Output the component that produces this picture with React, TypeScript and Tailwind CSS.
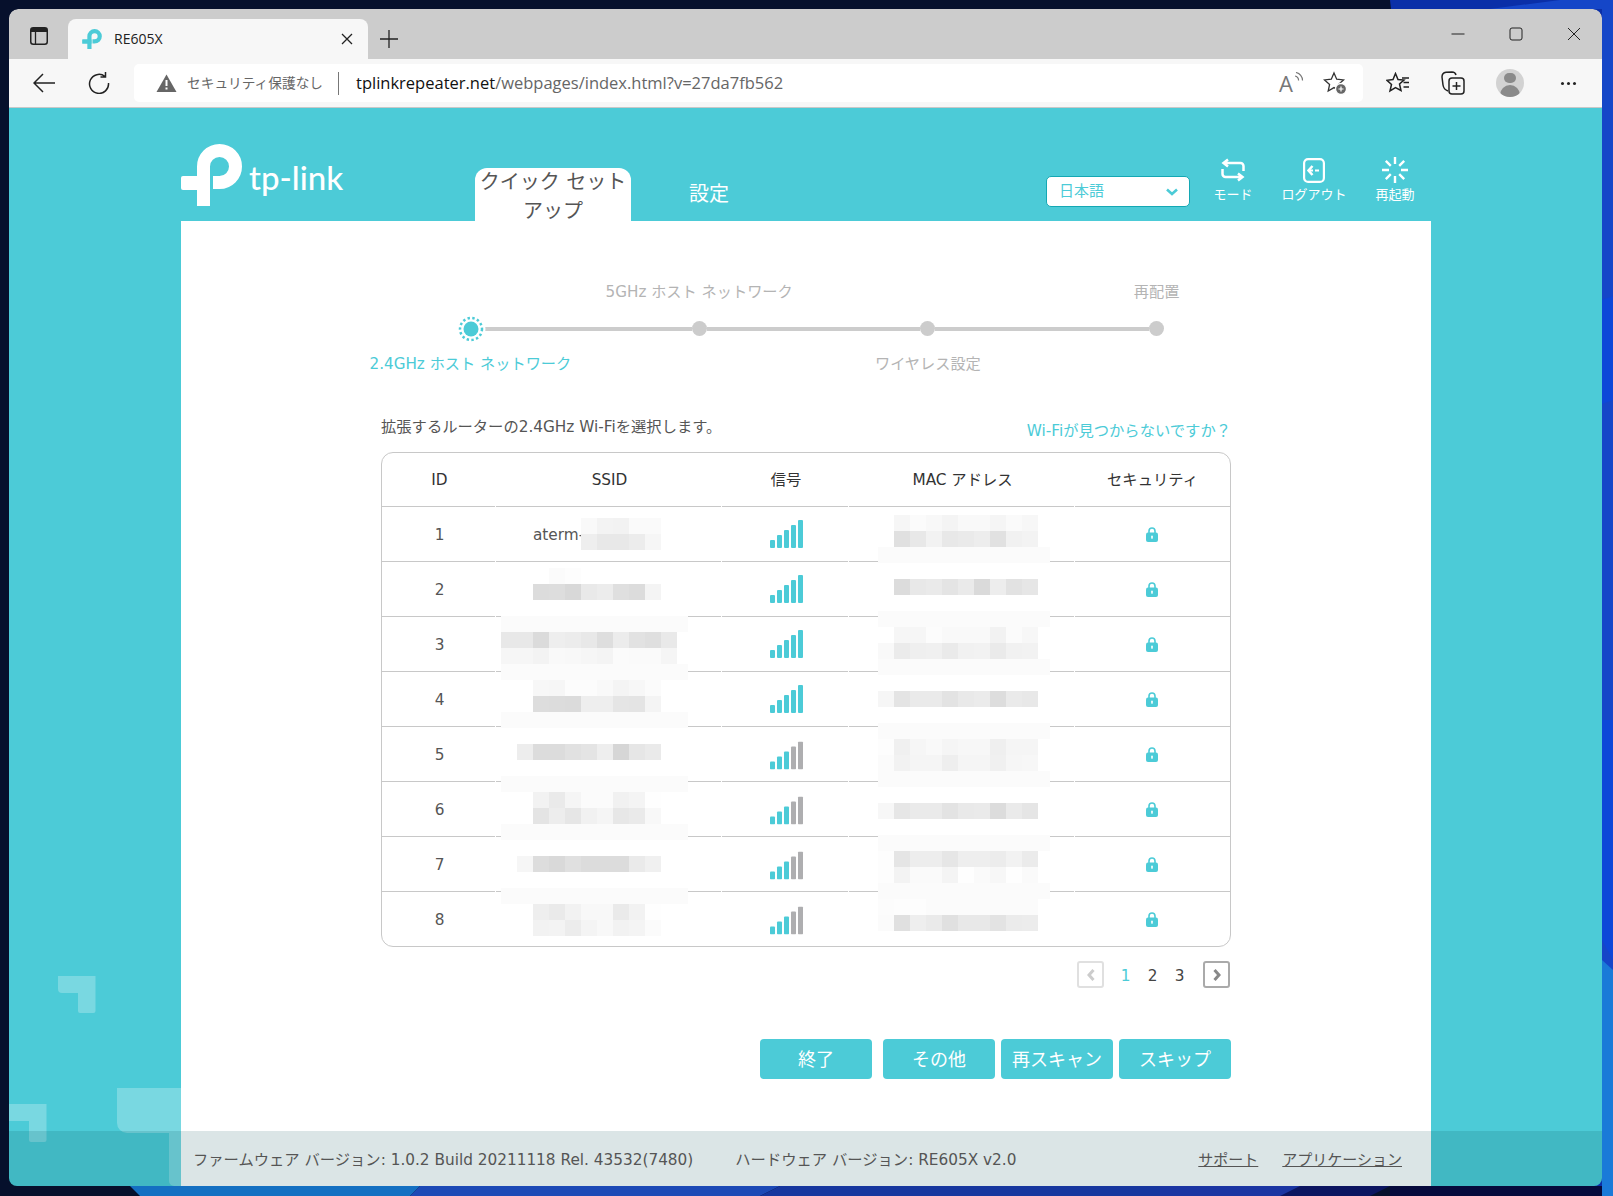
import * as React from "react";

const COLUMNS = "grid grid-cols-[114px_226px_127px_226px_155px]";

// pixelated areas of the screenshot: [top, left, ...shades], 16px blocks, page coordinates
const BLOCKS: [number, number, ...string[]][] = [
  [518, 581, "f9", "f3", "f2", "fa", "fa"],
  [534, 581, "ee", "e8", "e8", "ec", "f6"],
  [568, 549, "fb", "fd"],
  [584, 533, "dc", "dd", "d8", "e9", "ec", "df", "dc", "f4"],
  [632, 501, "e8", "e8", "db", "ee", "ec", "e8", "de", "ec", "e2", "df", "e9"],
  [648, 501, "f6", "f6", "f3", "f9", "f8", "f6", "f4", "fb", "fa", "fa", "f5"],
  [680, 533, "f7", "f6", "fc", "fc", "f9", "f4", "f7", "fb"],
  [696, 533, "dd", "dc", "db", "ee", "ee", "e5", "e4", "f4"],
  [744, 517, "ed", "dc", "dc", "e1", "e4", "ee", "d6", "e6", "ea"],
  [792, 533, "f2", "ea", "f5", "fb", "fb", "f1", "f4", "fe"],
  [808, 533, "e4", "ed", "e6", "f1", "f5", "e7", "ea", "f8"],
  [856, 517, "f6", "dd", "d9", "e0", "dc", "dc", "dc", "ea", "f0"],
  [904, 533, "ee", "ea", "f2", "f8", "f8", "ea", "f2", "fe"],
  [920, 533, "f2", "f3", "ec", "f4", "f8", "f2", "f4", "fb"],
  [515, 894, "f6", "fb", "f8", "f4", "f9", "f9", "f5", "fa", "f7"],
  [531, 894, "e0", "e8", "f2", "e8", "ea", "ed", "e1", "f1", "f3"],
  [579, 894, "dc", "e8", "ea", "e4", "ea", "da", "ed", "e2", "e6"],
  [627, 894, "f6", "f6", "fc", "f9", "f9", "f9", "f2", "fb", "f7"],
  [643, 878, "f9", "eb", "ef", "f0", "ea", "f1", "f2", "ea", "f1", "f2"],
  [691, 878, "f6", "e4", "ea", "ea", "e3", "e9", "eb", "dd", "ea", "e8"],
  [739, 878, "fd", "f0", "f6", "f9", "f5", "f7", "f7", "ef", "f5", "f5"],
  [755, 878, "fb", "f2", "f5", "f5", "ee", "f5", "f5", "f0", "f6", "f7"],
  [803, 878, "f7", "e6", "ea", "ea", "e3", "e9", "ea", "dc", "ea", "e5"],
  [851, 878, "fd", "e5", "ed", "ed", "e6", "ee", "ee", "ec", "f2", "eb"],
  [867, 878, "fd", "f3", "fa", "fa", "f4", "fe", "fa", "f7", "fe", "fa"],
  [899, 878, "fc", "fd", "fd", "fb", "fb", "fb", "fb", "fb", "fb", "fb"],
  [915, 878, "fb", "e0", "ee", "ea", "e0", "e8", "e8", "e3", "eb", "ec"],
];

// light bands that run over the row rules
const BANDS: [number, number, number][] = [
  [616, 501, 187],
  [664, 501, 187],
  [712, 501, 187],
  [776, 501, 187],
  [824, 501, 187],
  [888, 501, 187],
  [547, 878, 172],
  [611, 878, 172],
  [659, 878, 172],
  [723, 878, 172],
  [771, 878, 172],
  [835, 878, 172],
  [883, 878, 172],
];

function Mosaic() {
  return (
    <div className="absolute inset-0 pointer-events-none">
      {BANDS.map(([top, left, width]) => (
        <div
          key={`${top}-${left}`}
          className="absolute h-[16px] bg-[#fbfbfb]"
          style={{ top: top - 453, left: left - 382, width }}
        />
      ))}
      {BLOCKS.map(([top, left, ...shades]) =>
        shades.map((shade, i) => (
          <div
            key={`${top}-${left}-${i}`}
            className="absolute h-[16px] w-[16px]"
            style={{
              top: top - 453,
              left: left - 382 + i * 16,
              background: `#${shade}${shade}${shade}`,
            }}
          />
        )),
      )}
    </div>
  );
}

function TpMark({ className }: { className: string }) {
  return (
    <svg viewBox="181 144 61 62" className={className} fill="none" stroke="currentColor">
      <path d="M203.5 206V166.5A16 16 0 1 1 219.5 182.5H213" strokeWidth="13" />
      <rect x="181" y="176" width="29" height="14" rx="2" fill="currentColor" stroke="none" />
    </svg>
  );
}

function Signal({ weak }: { weak?: boolean }) {
  const bars = [8, 13, 18, 23, 28];
  return (
    <svg viewBox="0 0 34 28" className={`ml-[3px] h-[28px] w-[34px] ${weak ? "translate-y-[1.5px]" : ""}`}>
      {bars.map((h, i) => (
        <rect
          key={h}
          x={i * 7}
          y={28 - h}
          width="5"
          height={h}
          rx="1"
          fill={weak && i > 2 ? "#aeaeb0" : "#4ccbd7"}
        />
      ))}
    </svg>
  );
}

function Lock() {
  return (
    <svg viewBox="0 0 12 15" className="mr-[2px] h-[15px] w-[12px]">
      <path d="M3 7V4a3 3 0 0 1 6 0v3" fill="none" stroke="#4ccbd7" strokeWidth="1.6" />
      <rect x="0" y="5.5" width="12" height="9.5" rx="2" fill="#4ccbd7" />
      <rect x="5.2" y="8.5" width="1.6" height="3.4" rx=".8" fill="#fff" />
    </svg>
  );
}

function Wallpaper() {
  return (
    <svg viewBox="0 0 1613 1196" className="absolute inset-0 h-full w-full">
      <rect width="1613" height="1196" fill="#06102c" />
      <path d="M1390 0H1613V1196H1400L1500 1000Z" fill="#0a2fa8" />
      <path d="M1490 9L1560 0H1613V1196H1602V9Z" fill="#1546c8" />
      <path d="M1602 300L1613 296V400L1602 404ZM1602 720H1613V960L1602 940Z" fill="#0d47d8" />
      <path d="M1602 960L1613 970V1196H1602Z" fill="#1a7ad8" />
      <path d="M130 1186H420L410 1196H140Z" fill="#1470c2" />
      <path d="M420 1186H780L760 1196H410Z" fill="#1c49b6" />
      <path d="M780 1186H1160V1196H760Z" fill="#16369e" />
      <path d="M1160 1186H1340L1320 1196H1160Z" fill="#1a35a2" />
      <path d="M1300 1186H1390L1370 1196H1280Z" fill="#0b1560" />
      <path d="M1390 1186H1602V1196H1390Z" fill="#050a3c" />
    </svg>
  );
}

function WindowControls() {
  return (
    <div className="flex items-center text-[#222]">
      <div className="flex h-[50px] w-[58px] items-center justify-center">
        <svg viewBox="0 0 14 14" className="h-[14px] w-[14px]" fill="none" stroke="currentColor">
          <path d="M0.5 7H13.5" />
        </svg>
      </div>
      <div className="flex h-[50px] w-[58px] items-center justify-center">
        <svg viewBox="0 0 14 14" className="h-[14px] w-[14px]" fill="none" stroke="currentColor">
          <rect x="1" y="1" width="12" height="12" rx="2" />
        </svg>
      </div>
      <div className="flex h-[50px] w-[57px] items-center justify-center">
        <svg viewBox="0 0 14 14" className="h-[14px] w-[14px]" fill="none" stroke="currentColor">
          <path d="M1 1L13 13M13 1L1 13" />
        </svg>
      </div>
    </div>
  );
}

function BrowserChrome() {
  return (
    <div className="font-['Open_Sans','Noto_Sans_CJK_JP',sans-serif]">
      <div className="flex h-[50px] items-end rounded-t-[9px] bg-[#cccccc]">
        <div className="flex h-[50px] w-[59px] items-center justify-center pt-[4px]">
          <svg viewBox="0 0 18 18" className="h-[18px] w-[18px]" fill="none" stroke="#222">
            <rect x=".75" y=".75" width="16.5" height="16.5" rx="2.5" strokeWidth="1.5" />
            <path d="M1 1H17V5H1Z" fill="#222" stroke="none" />
            <path d="M5.5 5V17" strokeWidth="1.3" />
          </svg>
        </div>
        <div className="flex h-[40px] w-[300px] items-center rounded-t-[8px] bg-[#f7f7f7] pb-[1px] pl-[14px] pr-[15px]">
          <TpMark className="h-[20px] w-[20px] text-[#4ccbd7]" />
          <span className="ml-[12px] flex-1 text-[14px] text-[#222]">RE605X</span>
          <svg viewBox="0 0 12 12" className="h-[12px] w-[12px]" fill="none" stroke="#222" strokeWidth="1.3">
            <path d="M1 1L11 11M11 1L1 11" />
          </svg>
        </div>
        <div className="flex h-[40px] w-[42px] items-center justify-center">
          <svg viewBox="0 0 18 18" className="h-[18px] w-[18px]" fill="none" stroke="#222" strokeWidth="1.3">
            <path d="M9 0V18M0 9H18" />
          </svg>
        </div>
        <div className="flex-1" />
        <WindowControls />
      </div>
      <div className="flex h-[49px] border-b border-[#c8c8c8] bg-[#f7f7f7] pt-[5px]">
        <div className="flex h-[38px] w-[70px] items-center justify-center">
          <svg viewBox="0 0 22 20" className="h-[20px] w-[22px]" fill="none" stroke="#222" strokeWidth="1.5">
            <path d="M22 10H1M10 1L1 10L10 19" />
          </svg>
        </div>
        <div className="flex h-[38px] w-[40px] items-center justify-center">
          <svg viewBox="0 0 22 22" className="h-[22px] w-[22px]" fill="none" stroke="#222" strokeWidth="1.5">
            <path d="M17 4.5A9.5 9.5 0 1 0 20.5 11M17.5 0V5H12.5" />
          </svg>
        </div>
        <div className="w-[15px]" />
        <div className="flex h-[38px] w-[1229px] items-center rounded-[5px] bg-white pl-[22px] pr-[16px]">
          <svg viewBox="0 0 21 18" className="h-[18px] w-[21px]">
            <path d="M10.5 0.5L20.5 18H0.5Z" fill="#666" />
            <path d="M10.5 6V12M10.5 13.5V15.5" stroke="#fff" strokeWidth="2" />
          </svg>
          <span className="ml-[10px] w-[151px] whitespace-nowrap text-[13.7px] text-[#666]">セキュリティ保護なし</span>
          <span className="h-[23px] w-px bg-[#777]" />
          <span className="ml-[17px] whitespace-nowrap text-[16.5px] text-[#111]">
            tplinkrepeater.net<span className="text-[#666]">/webpages/index.html?v=27da7fb562</span>
          </span>
          <div className="flex-1" />
          <span className="relative mr-[22px] flex h-[24px] w-[22px] items-center text-[22px] leading-none text-[#777]">
            A
            <svg viewBox="0 0 10 12" className="absolute right-[-3px] top-[1px] h-[12px] w-[10px]" fill="none" stroke="#777" strokeWidth="1.2">
              <path d="M1 4A4 4 0 0 1 4.5 8.5M2 0.5A8 8 0 0 1 8.5 8.5" />
            </svg>
          </span>
          <svg viewBox="0 0 24 24" className="h-[24px] w-[24px]" fill="none" stroke="#333" strokeWidth="1.3">
            <path d="M11 2L13.7 8.2L20.5 8.9L15.4 13.4L16.8 20L11 16.6L5.2 20L6.6 13.4L1.5 8.9L8.3 8.2Z" />
            <circle cx="18" cy="18" r="5.5" fill="#666" stroke="#fff" />
            <path d="M18 15.5V20.5M15.5 18H20.5" stroke="#fff" strokeWidth="1.2" />
          </svg>
        </div>
        <div className="flex h-[38px] w-[70px] items-center justify-center">
          <svg viewBox="0 0 24 22" className="h-[22px] w-[24px]" fill="none" stroke="#222" strokeWidth="1.5">
            <path d="M9.5 1.5L12 7.5L18 8L13.5 12L15 18.5L9.5 15.5L4 19L5.5 12.5L1 8.3L7 7.5Z" />
            <path d="M16 6H23M17.5 10.5H23M17.5 15H23" />
          </svg>
        </div>
        <div className="flex h-[38px] w-[40px] items-center justify-center">
          <svg viewBox="0 0 24 24" className="h-[24px] w-[24px]" fill="none" stroke="#222" strokeWidth="1.5">
            <path d="M7 20C4 19 2.5 17 2 14L1 6C1 3 2.5 1.5 5 1.2L11 1C13 1 14.5 2 15 4" />
            <rect x="8" y="7" width="15" height="16" rx="3" />
            <path d="M15.5 11V19M11.5 15H19.5" />
          </svg>
        </div>
        <div className="flex h-[38px] w-[74px] items-center justify-center">
          <div className="flex h-[28px] w-[28px] flex-col items-center overflow-hidden rounded-full bg-[#d2d2d2] pt-[4px]">
            <div className="h-[12px] w-[12px] rounded-full bg-[#8a8a8a]" />
            <div className="mt-[2px] h-[14px] w-[20px] rounded-t-full bg-[#8a8a8a]" />
          </div>
        </div>
        <div className="flex h-[38px] w-[42px] items-center justify-center gap-[3px]">
          <span className="h-[3px] w-[3px] rounded-full bg-[#222]" />
          <span className="h-[3px] w-[3px] rounded-full bg-[#222]" />
          <span className="h-[3px] w-[3px] rounded-full bg-[#222]" />
        </div>
      </div>
    </div>
  );
}

function HeaderIcon({ icon, label, className }: { icon: React.ReactNode; label: string; className: string }) {
  return (
    <div className={`flex h-[64px] flex-col items-center ${className}`}>
      <div className="flex h-[26px] items-center">{icon}</div>
      <span className="mt-[3px] whitespace-nowrap text-[13px] leading-[18px] text-white">{label}</span>
    </div>
  );
}

function Header() {
  return (
    <div className="flex h-[113px] items-end pl-[172px]">
      <div className="mb-[15px] flex w-[294px]">
        <TpMark className="h-[62px] w-[61px] text-white" />
        <span className="ml-[7px] mt-[17px] font-['Lato',sans-serif] text-[33px] font-medium leading-[33px] text-white">
          tp-link
        </span>
      </div>
      <div className="flex h-[53px] w-[156px] items-center justify-center rounded-t-[12px] bg-white pt-[4px] text-center text-[20px] leading-[29px] text-[#555]">
        クイック セット
        <br />
        アップ
      </div>
      <div className="flex h-[53px] w-[156px] items-center justify-center pb-[2px] text-[20px] text-white">設定</div>
      <div className="mb-[14px] ml-[259px] flex h-[31px] w-[144px] items-center justify-between rounded-[5px] border border-[#14a8b4] bg-white pl-[12px] pr-[11px] text-[15px] text-[#4ccbd7]">
        日本語
        <svg viewBox="0 0 12 8" className="h-[8px] w-[12px]" fill="none" stroke="#4ccbd7" strokeWidth="2.6">
          <path d="M1 1.5L6 6L11 1.5" />
        </svg>
      </div>
      <div className="flex">
        <HeaderIcon
          className="w-[86px]"
          label="モード"
          icon={
            <svg viewBox="0 0 26 24" className="h-[24px] w-[26px]" fill="none" stroke="#fff" strokeWidth="2.5">
              <path d="M8 1.5L3.5 5L8 8.5M3.5 5H20.5A3 3 0 0 1 23.5 8V13" />
              <path d="M18 15.5L22.5 19L18 22.5M22.5 19H5.5A3 3 0 0 1 2.5 16V11" />
            </svg>
          }
        />
        <HeaderIcon
          className="w-[76px]"
          label="ログアウト"
          icon={
            <svg viewBox="0 0 22 25" className="h-[25px] w-[22px]" fill="none" stroke="#fff" strokeWidth="2.2">
              <rect x="1.1" y="1.1" width="19.8" height="22.8" rx="4" />
              <path d="M9.5 8L5.5 12.5L9.5 17" strokeWidth="2.5" />
              <path d="M7 12.5H10M12 12.5H16" strokeWidth="2.2" />
            </svg>
          }
        />
        <HeaderIcon
          className="w-[86px]"
          label="再起動"
          icon={
            <svg viewBox="0 0 26 26" className="h-[26px] w-[26px]" fill="none" stroke="#fff" strokeWidth="2.4">
              <path d="M13 0V7M13 19V26M0 13H7M19 13H26M3.8 3.8L8.8 8.8M17.2 17.2L22.2 22.2M22.2 3.8L17.2 8.8M8.8 17.2L3.8 22.2" />
            </svg>
          }
        />
      </div>
    </div>
  );
}

function Stepper() {
  return (
    <div className="ml-[175px] w-[915px]">
      <div className="mt-[61px] grid h-[20px] grid-cols-4 text-center text-[15.2px] leading-[20px] text-[#b4b4b4]">
        <span />
        <span>5GHz ホスト ネットワーク</span>
        <span />
        <span>再配置</span>
      </div>
      <div className="ml-[107px] mt-[19px] flex h-[15px] w-[701px] items-center">
        <div className="relative h-[15px] w-[15px] rounded-full bg-[#4ccbd7]">
          <svg viewBox="0 0 30 30" className="absolute left-[-7.5px] top-[-7.5px] h-[30px] w-[30px]" fill="none">
            <circle cx="15" cy="15" r="14.5" fill="#fff" />
            <circle cx="15" cy="15" r="7.5" fill="#4ccbd7" />
            <circle cx="15" cy="15" r="11" stroke="#4ccbd7" strokeWidth="2.5" strokeDasharray="2.4 2.4" />
          </svg>
        </div>
        <div className="h-[4px] flex-1 bg-[#cccccc]" />
        <div className="h-[15px] w-[15px] rounded-full bg-[#cccccc]" />
        <div className="h-[4px] flex-1 bg-[#cccccc]" />
        <div className="h-[15px] w-[15px] rounded-full bg-[#cccccc]" />
        <div className="h-[4px] flex-1 bg-[#cccccc]" />
        <div className="h-[15px] w-[15px] rounded-full bg-[#cccccc]" />
      </div>
      <div className="mt-[18px] grid h-[20px] grid-cols-4 text-center text-[15.2px] leading-[20px] text-[#b4b4b4]">
        <span className="whitespace-nowrap text-[#4ccbd7]">2.4GHz ホスト ネットワーク</span>
        <span />
        <span>ワイヤレス設定</span>
        <span />
      </div>
    </div>
  );
}

function HeadCell({ children }: { children: React.ReactNode }) {
  return (
    <div className="mr-px flex h-[54px] items-center justify-center border-b border-[#c8c8c8] pl-[2px] pt-[2px] last:mr-0 last:pl-0">
      {children}
    </div>
  );
}

function NetworkTable() {
  const rows = [1, 2, 3, 4, 5, 6, 7, 8];
  return (
    <div className="relative mt-[9px] rounded-[12px] border border-[#c8c8c8] text-[15.3px] text-[#555]">
      <div className={`${COLUMNS} text-[#333]`}>
        <HeadCell>ID</HeadCell>
        <HeadCell>SSID</HeadCell>
        <HeadCell>信号</HeadCell>
        <HeadCell>MAC アドレス</HeadCell>
        <HeadCell>セキュリティ</HeadCell>
      </div>
      {rows.map((id) => {
        const cell = `mr-px flex items-center justify-center ${id < 8 ? "h-[55px] border-b border-[#c8c8c8]" : "h-[54px]"}`;
        return (
          <div key={id} className={COLUMNS}>
            <div className={`${cell} pl-[2px] pt-[2px]`}>{id}</div>
            <div className={`${cell} !justify-start pl-[37px] pt-[2px]`}>{id === 1 ? "aterm-" : ""}</div>
            <div className={cell}>
              <Signal weak={id > 4} />
            </div>
            <div className={cell} />
            <div className={`${cell} !mr-0`}>
              <Lock />
            </div>
          </div>
        );
      })}
      <Mosaic />
    </div>
  );
}

function Pager() {
  return (
    <div className="mr-[1px] mt-[14px] flex items-center justify-end text-[15.3px] text-[#444]">
      <div className="flex h-[27px] w-[27px] items-center justify-center rounded-[3px] border-2 border-[#e0e0e0]">
        <svg viewBox="0 0 8 12" className="h-[12px] w-[8px]" fill="none" stroke="#ccc" strokeWidth="3">
          <path d="M6.5 1L2 6L6.5 11" />
        </svg>
      </div>
      <span className="ml-[8px] w-[27px] pt-[3px] text-center text-[#4ccbd7]">1</span>
      <span className="w-[27px] pt-[3px] text-center">2</span>
      <span className="w-[27px] pt-[3px] text-center">3</span>
      <div className="ml-[10px] flex h-[27px] w-[27px] items-center justify-center rounded-[3px] border-2 border-[#aaaaaa]">
        <svg viewBox="0 0 8 12" className="h-[12px] w-[8px]" fill="none" stroke="#888" strokeWidth="3">
          <path d="M1.5 1L6 6L1.5 11" />
        </svg>
      </div>
    </div>
  );
}

function ActionButton({ children, className = "" }: { children: React.ReactNode; className?: string }) {
  return (
    <div className={`flex h-[40px] w-[112px] items-center justify-center rounded-[4px] bg-[#4ccbd7] pt-[1px] text-[18px] text-white ${className}`}>
      {children}
    </div>
  );
}

function BackdropShapes() {
  return (
    <svg viewBox="0 0 172 1079" className="absolute left-0 top-[-1px] h-[1079px] w-[172px]" fill="#fff" fillOpacity=".25">
      <path d="M49 869H86.5V904a2 2 0 0 1-2 2H71a2 2 0 0 1-2-2V886H53a4 4 0 0 1-4-4Z" />
      <path d="M0 997H37.5V1033a2 2 0 0 1-2 2H22a2 2 0 0 1-2-2V1014H0Z" />
      <path d="M108 981H172V1079H165a5 5 0 0 1-5-5V1026H118a10 10 0 0 1-10-10Z" />
    </svg>
  );
}

function Footer() {
  return (
    <div className="absolute inset-x-0 bottom-0 h-[55px] bg-[rgba(0,70,80,0.14)]">
      <div className="ml-[172px] flex h-full w-[1250px] items-center pl-[12px] pr-[29px] pt-[3px] text-[15.3px] text-[#555]">
        <span className="whitespace-nowrap">ファームウェア バージョン: 1.0.2 Build 20211118 Rel. 43532(7480)</span>
        <span className="ml-[42px] whitespace-nowrap">ハードウェア バージョン: RE605X v2.0</span>
        <div className="flex-1" />
        <span className="text-[15px] underline">サポート</span>
        <span className="ml-[24px] text-[15px] underline">アプリケーション</span>
      </div>
    </div>
  );
}

export default function App() {
  return (
    <div className="relative h-[1196px] w-[1613px] overflow-hidden pl-[9px] pt-[9px]">
      <Wallpaper />
      <div className="relative h-[1177px] w-[1593px] overflow-hidden rounded-t-[9px] rounded-b-[8px]">
        <BrowserChrome />
        <div className="relative h-[1078px] bg-[#4ccbd7] font-['DejaVu_Sans','Noto_Sans_CJK_JP',sans-serif]">
          <BackdropShapes />
          <div className="relative">
            <Header />
            <div className="ml-[172px] h-[965px] w-[1250px] bg-white">
              <div className="flow-root">
                <Stepper />
              </div>
              <div className="ml-[200px] w-[850px]">
                <div className="mt-[45px] flex h-[24px] items-end justify-between">
                  <span className="mb-[4px] whitespace-nowrap text-[15.3px] leading-[24px] text-[#555]">
                    拡張するルーターの2.4GHz Wi-Fiを選択します。
                  </span>
                  <span className="whitespace-nowrap text-[15.3px] leading-[24px] text-[#4ccbd7]">Wi-Fiが見つからないですか？</span>
                </div>
                <NetworkTable />
                <Pager />
                <div className="mt-[51px] flex justify-end">
                  <ActionButton className="mr-[11px]">終了</ActionButton>
                  <ActionButton className="mr-[6px]">その他</ActionButton>
                  <ActionButton className="mr-[6px]">再スキャン</ActionButton>
                  <ActionButton>スキップ</ActionButton>
                </div>
              </div>
            </div>
          </div>
          <Footer />
        </div>
      </div>
    </div>
  );
}
